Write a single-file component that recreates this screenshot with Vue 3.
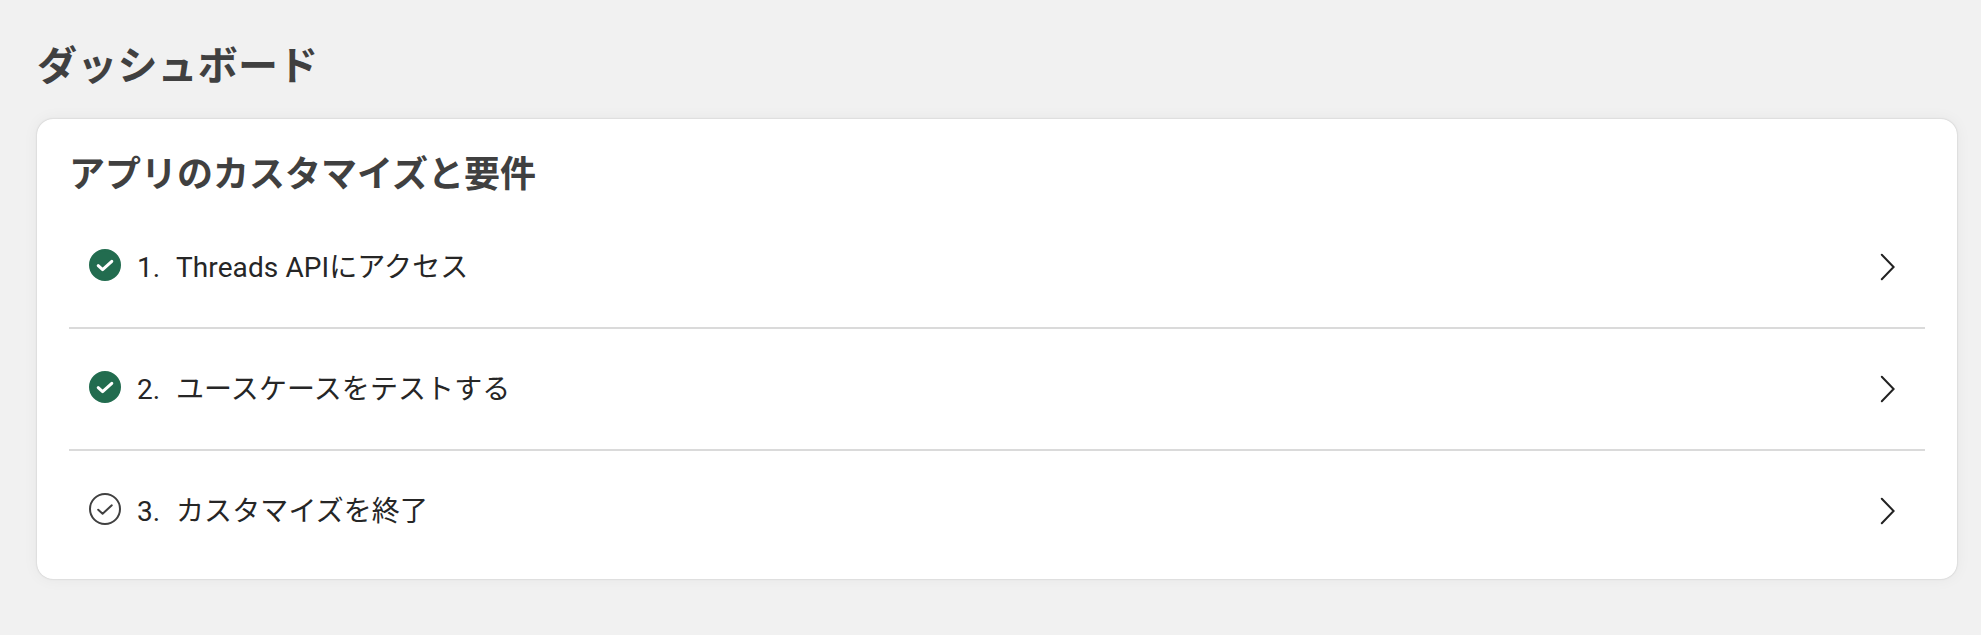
<script setup>
const steps = [
  { label: "Threads APIにアクセス", done: true },
  { label: "ユースケースをテストする", done: true },
  { label: "カスタマイズを終了", done: false },
];
</script>

<template>
  <main class="dashboard">
    <h1>ダッシュボード</h1>
    <section class="card">
      <h2>アプリのカスタマイズと要件</h2>
      <ul>
        <li v-for="(step, i) in steps" :key="step.label">
          <svg class="check" :class="{ done: step.done }" viewBox="0 0 32 32">
            <circle class="ring" cx="16" cy="16" r="15" />
            <path class="tick" d="M9.2 16.7l4.4 4 9.2-8.4" />
          </svg>
          <span class="number">{{ i + 1 }}.</span>
          <span class="label">{{ step.label }}</span>
          <svg class="chevron" viewBox="0 0 16 28">
            <path d="M1.8 1.8L13.6 14 1.8 26.2" />
          </svg>
        </li>
      </ul>
    </section>
  </main>
</template>

<style>
body {
  background-color: #f1f1f1;
}
</style>

<style scoped>
.dashboard {
  box-sizing: border-box;
  min-height: 635px;
  padding: 37px 24px 0 37px;

  font-family: Roboto, "Noto Sans CJK JP", sans-serif;
  color: #262626;
}

h1, h2 {
  margin: 0;
  color: #404040;
  font-weight: 700;
}

h1 {
  font-size: 40px;
  line-height: 60px;
  letter-spacing: .2px;
}

.card {
  box-sizing: border-box;
  height: 460px;
  margin-top: 22px;
  padding: 30px 32px 0;

  background-color: #fff;
  border-radius: 16px;
  box-shadow: 0 0 2px rgba(0, 0, 0, .2), 0 0 16px rgba(0, 0, 0, .05);
}

h2 {
  font-size: 36px;
  line-height: 52px;
}

ul {
  margin: 6px 0 0;
  padding: 0;
  list-style: none;
}

li {
  box-sizing: border-box;
  display: flex;
  align-items: center;
  height: 122px;
  padding: 0 29px 0 20px;

  border-bottom: 2px solid #dadada;

  font-size: 28px;
  line-height: 40px;
}

li:last-child {
  border-bottom-color: transparent;
}

.check {
  width: 32px;
  height: 32px;
  margin: 0 16px 4px 0;
  fill: none;
  stroke: #404040;
  stroke-width: 2;
}

.tick {
  stroke-linecap: round;
  stroke-linejoin: round;
}

.check.done .ring {
  fill: #226c4f;
  stroke: #226c4f;
}

.check.done .tick {
  stroke: #fff;
  stroke-width: 3;
}

.number,
.label {
  padding-top: 2px;
}

.number {
  width: 39px;
}

.label {
  flex: 1;
  letter-spacing: .1px;
}

.chevron {
  width: 16px;
  height: 28px;
  fill: none;
  stroke: #222;
  stroke-width: 2;
  stroke-linecap: round;
}
</style>
